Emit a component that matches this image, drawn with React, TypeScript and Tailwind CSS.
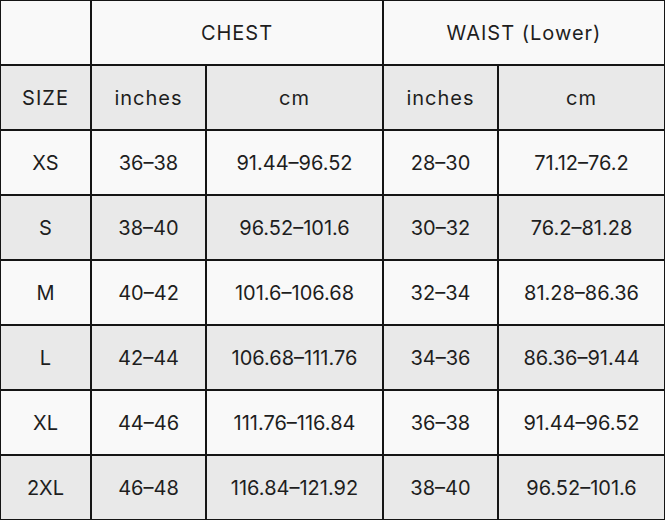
const rows: string[][] = [
  ['XS', '36–38', '91.44–96.52', '28–30', '71.12–76.2'],
  ['S', '38–40', '96.52–101.6', '30–32', '76.2–81.28'],
  ['M', '40–42', '101.6–106.68', '32–34', '81.28–86.36'],
  ['L', '42–44', '106.68–111.76', '34–36', '86.36–91.44'],
  ['XL', '44–46', '111.76–116.84', '36–38', '91.44–96.52'],
  ['2XL', '46–48', '116.84–121.92', '38–40', '96.52–101.6'],
];

function Cell({
  children,
  gray,
  span,
  head,
}: {
  children?: React.ReactNode;
  gray?: boolean;
  span?: boolean;
  head?: boolean;
}) {
  return (
    <div
      className={`flex items-center justify-center ${gray ? 'bg-[#e9e9e9]' : 'bg-[#f9f9f9]'} ${span ? 'col-span-2' : ''} ${head ? 'tracking-[0.05em]' : ''}`}
    >
      {children}
    </div>
  );
}

export default function App() {
  return (
    <div
      className="grid h-[520px] w-[665px] grid-cols-[89px_113px_175px_113px_165px] grid-rows-[repeat(8,63px)] gap-[2px] bg-[#151515] p-[1px] text-[20px] text-[#1e1e1e]"
      style={{ fontFamily: 'Inter, "Noto Sans", sans-serif' }}
    >
      <Cell />
      <Cell span head>CHEST</Cell>
      <Cell span head>WAIST (Lower)</Cell>

      <Cell gray head>SIZE</Cell>
      <Cell gray head>inches</Cell>
      <Cell gray head>cm</Cell>
      <Cell gray head>inches</Cell>
      <Cell gray head>cm</Cell>

      {rows.map((r, i) =>
        r.map((v, j) => (
          <Cell key={`${i}-${j}`} gray={i % 2 === 1}>
            {v}
          </Cell>
        ))
      )}
    </div>
  );
}
